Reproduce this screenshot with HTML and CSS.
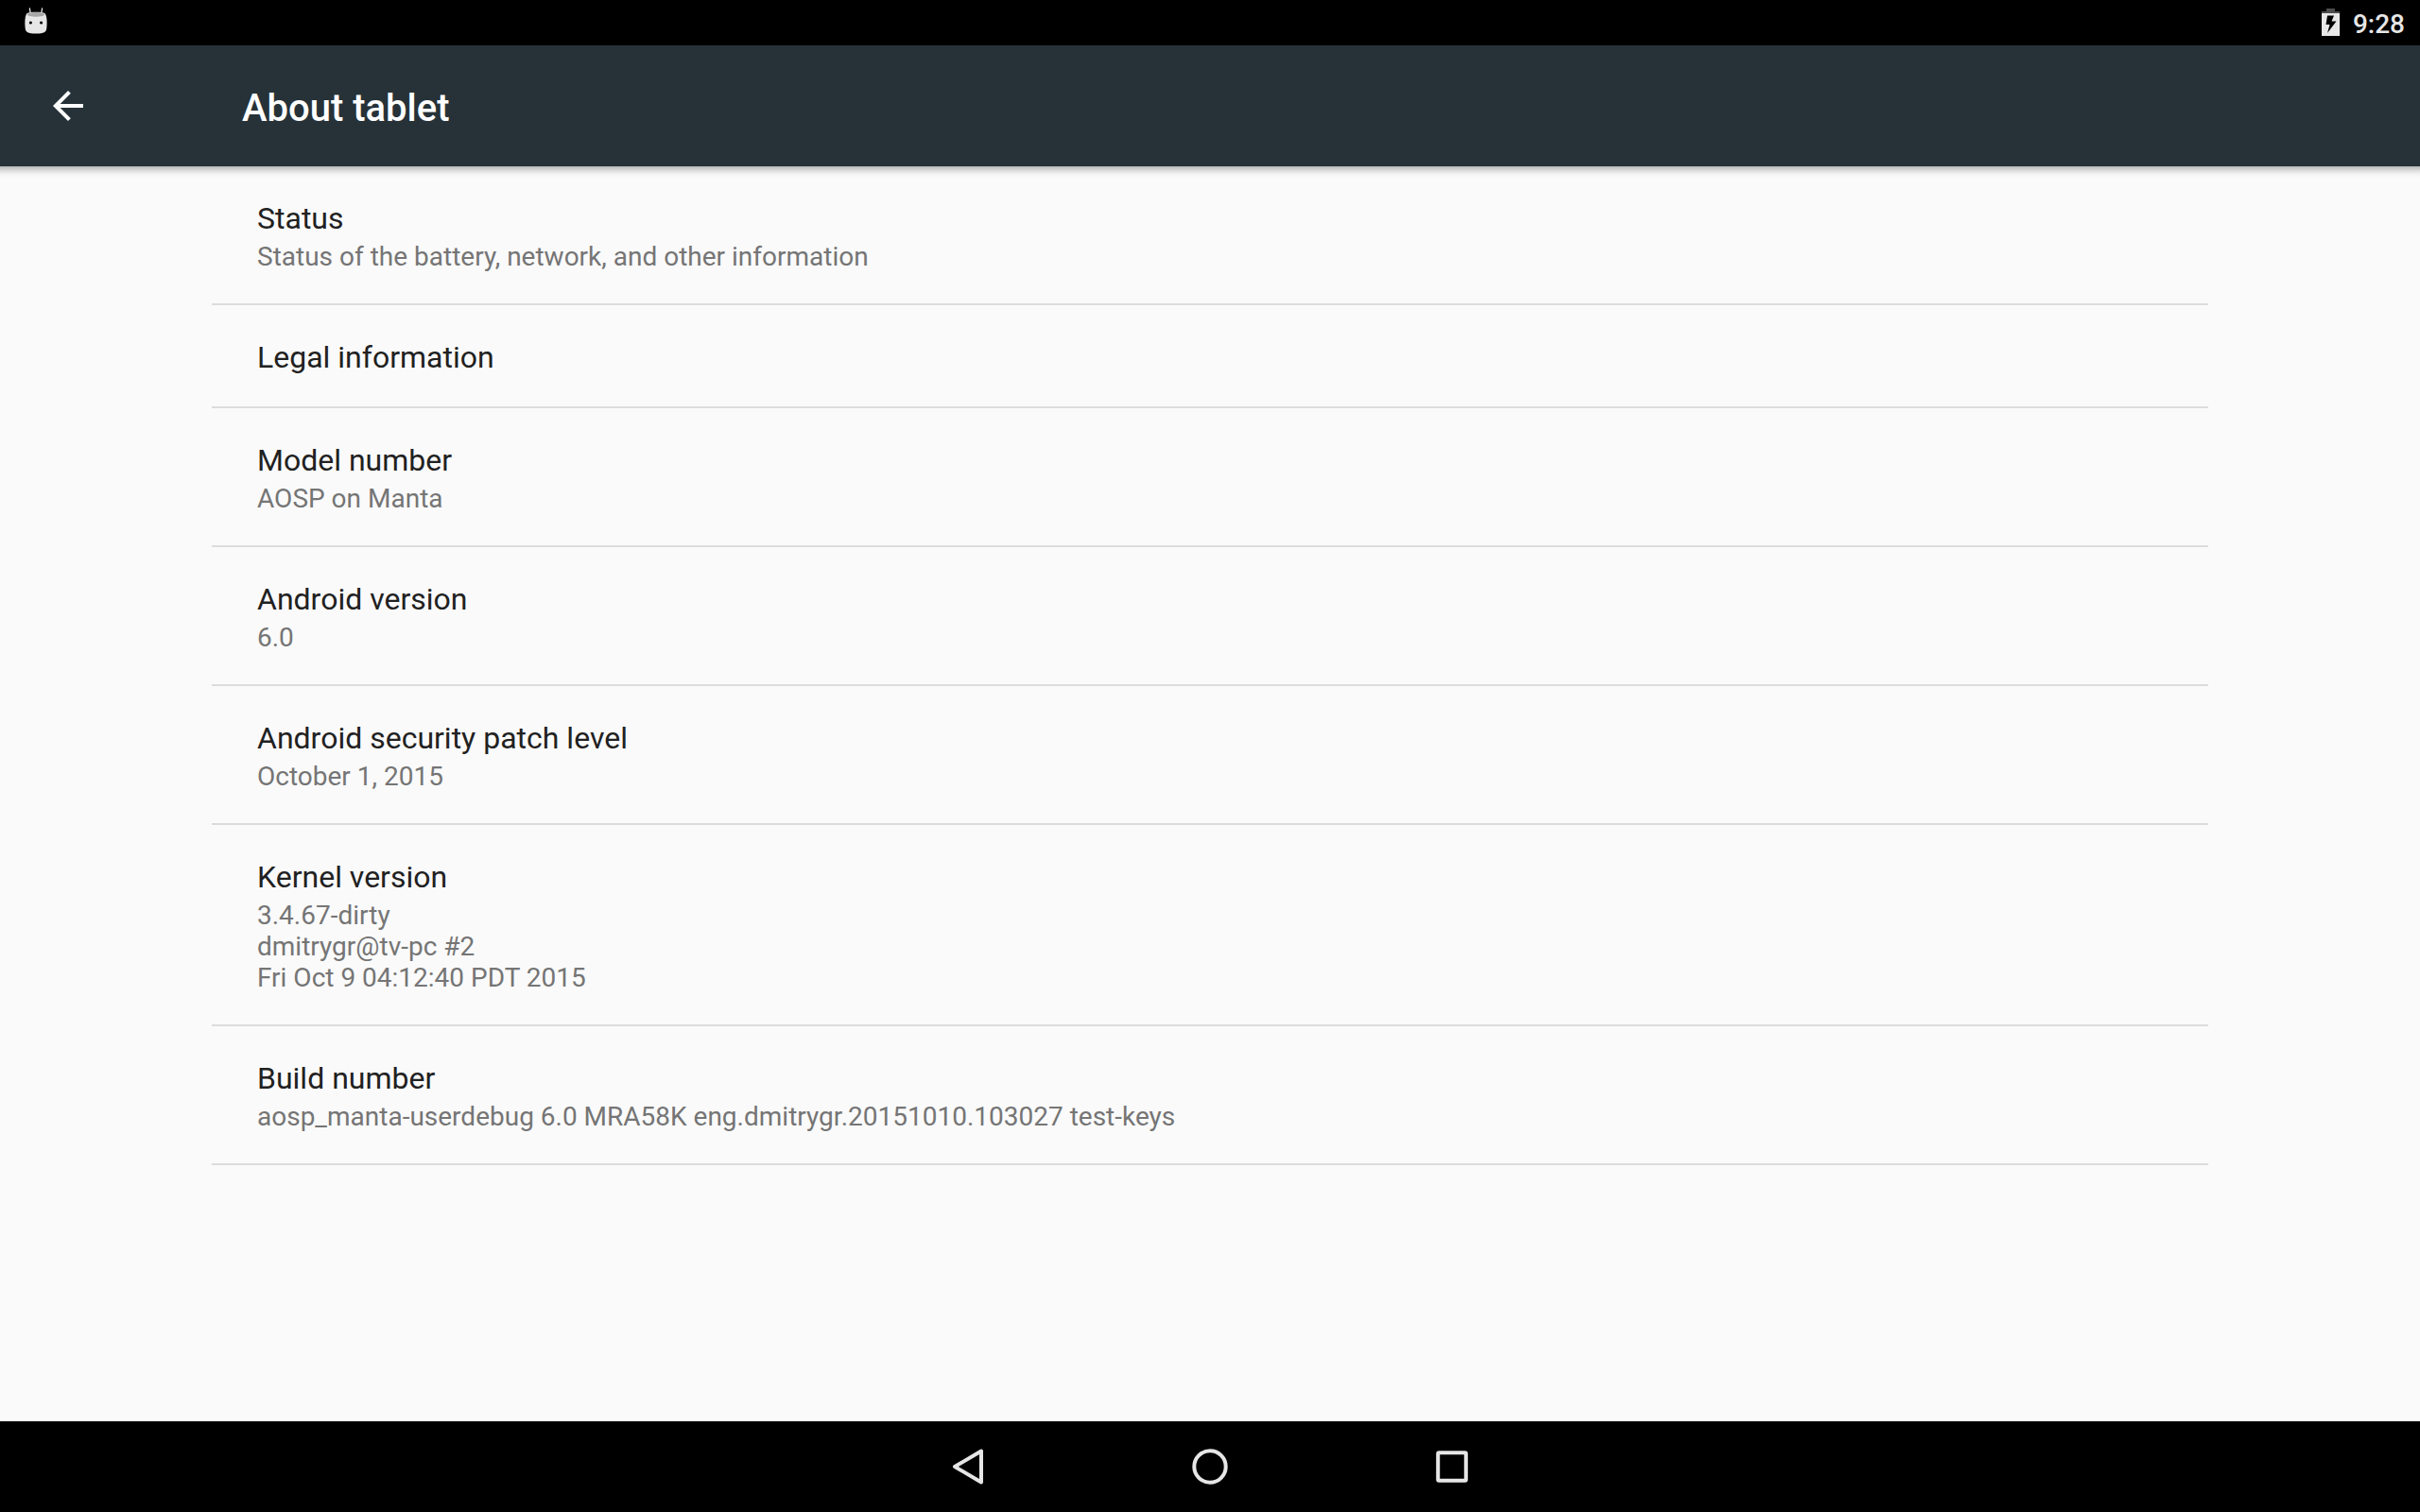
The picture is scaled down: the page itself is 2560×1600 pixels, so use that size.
FILE: index.html
```html
<!DOCTYPE html>
<html lang="en">
<head>
<meta charset="utf-8">
<title>About tablet</title>
<link rel="stylesheet" href="styles.css">
</head>
<body>
<div class="status-bar">
  <svg class="notification-icon" viewBox="0 0 24 28" aria-hidden="true">
    <path d="M5.4 .8 6.2 6M18.6 .8 17.8 6" fill="none" stroke="#e6e6e6" stroke-width="1.3" stroke-linecap="round"/>
    <path d="M2.6 6C6 4.4 18 4.4 21.4 6C24.200 9 23.800 18 23.200 22.500C22.600 26 21 27.500 12 27.500S1.400 26 .8 22.500C.2 18-.2 9 2.600 6Z" fill="#e6e6e6"/>
    <ellipse cx="12" cy="7.400" rx="9" ry="2.400" fill="#a6a6a6"/>
    <circle cx="6.400" cy="16" r="1.600" fill="#000"/>
    <circle cx="17.600" cy="16" r="1.600" fill="#000"/>
  </svg>
  <div class="status-right">
    <svg class="battery-icon" viewBox="0 0 19 29" aria-hidden="true">
      <path d="M5 0H14V3H19V5H0V3H5Z" fill="#4d4d4d"/>
      <path d="M0 5H19V29H0ZM6 7.500 4.500 17H8.500L6 26 15.500 13.500H10.500L13 7.500Z" fill="#e8e8e8" fill-rule="evenodd"/>
    </svg>
    <time class="clock">9:28</time>
  </div>
</div>
<header class="toolbar">
  <button class="up-button" aria-label="Navigate up">
    <svg class="up-icon" viewBox="0 0 24 24" aria-hidden="true"><path d="M20 11H7.830l5.590-5.590L12 4l-8 8 8 8 1.410-1.410L7.830 13H20v-2z" fill="#fff"/></svg>
  </button>
  <h1 class="toolbar-title">About tablet</h1>
</header>
<main class="content">
  <ul class="preferences">
    <li class="preference"><h2 class="title">Status</h2><p class="summary">Status of the battery, network, and other information</p></li>
    <li class="preference"><h2 class="title">Legal information</h2></li>
    <li class="preference"><h2 class="title">Model number</h2><p class="summary">AOSP on Manta</p></li>
    <li class="preference"><h2 class="title">Android version</h2><p class="summary">6.0</p></li>
    <li class="preference"><h2 class="title">Android security patch level</h2><p class="summary">October 1, 2015</p></li>
    <li class="preference"><h2 class="title">Kernel version</h2><p class="summary">3.4.67-dirty<br>dmitrygr@tv-pc #2<br>Fri Oct 9 04:12:40 PDT 2015</p></li>
    <li class="preference"><h2 class="title">Build number</h2><p class="summary">aosp_manta-userdebug 6.0 MRA58K eng.dmitrygr.20151010.103027 test-keys</p></li>
  </ul>
</main>
<nav class="nav-bar" aria-label="System navigation">
  <button class="nav-button" aria-label="Back">
    <svg class="nav-icon" viewBox="0 0 56 56" aria-hidden="true"><path d="M42 11.500V44.500L14 28Z" fill="none" stroke="#e6e6e6" stroke-width="4" stroke-linejoin="round"/></svg>
  </button>
  <button class="nav-button" aria-label="Home">
    <svg class="nav-icon" viewBox="0 0 56 56" aria-hidden="true"><circle cx="28" cy="28" r="16.700" fill="none" stroke="#e6e6e6" stroke-width="4"/></svg>
  </button>
  <button class="nav-button" aria-label="Recent apps">
    <svg class="nav-icon" viewBox="0 0 56 56" aria-hidden="true"><rect x="13.200" y="13.200" width="29.600" height="29.600" rx="1" fill="none" stroke="#e6e6e6" stroke-width="4"/></svg>
  </button>
</nav>
</body>
</html>
```
FILE: styles.css
```css
* {
  box-sizing: border-box;
}

body {
  margin: 0;
  min-height: 100vh;
  display: flex;
  flex-direction: column;
  background: #fafafa;
  font-family: Roboto, sans-serif;
}

h1, h2, p, ul {
  margin: 0;
  padding: 0;
}

button {
  display: flex;
  align-items: center;
  justify-content: center;
  padding: 0;
  border: 0;
  background: none;
}

.status-bar {
  display: flex;
  justify-content: space-between;
  height: 48px;
  padding: 8px 16px 0 26px;
  background: #000;
}

.notification-icon {
  width: 24px;
  height: 28px;
}

.status-right {
  display: flex;
  gap: 14px;
}

.battery-icon {
  width: 19px;
  height: 29px;
  margin-top: 1px;
}

.clock {
  color: #e6e6e6;
  font-size: 28px;
  font-weight: 500;
  line-height: 36px;
}

.toolbar {
  display: flex;
  align-items: center;
  height: 128px;
  padding: 0 16px;
  background: #263238;
}

.up-button {
  width: 112px;
  height: 112px;
}

.up-icon {
  width: 48px;
  height: 48px;
}

.toolbar-title {
  margin-left: 128px;
  padding-top: 6px;
  color: #fff;
  font-size: 40px;
  font-weight: 500;
  line-height: 48px;
}

.content {
  flex: 1;
  padding: 0 224px;
  /* shadow cast by the toolbar */
  background: linear-gradient(#b8b8b8, #d8d8d8 4px, #f2f2f2 8px, #fafafa 12px);
}

.preferences {
  list-style: none;
}

.preference {
  padding: 36px 48px 33px;
  border-bottom: 2px solid #dcdcdc;
}

.title {
  color: #212121;
  font-size: 32px;
  font-weight: 400;
  line-height: 38px;
}

.summary {
  margin-top: 5px;
  color: #757575;
  font-size: 28px;
  line-height: 33px;
}

.nav-bar {
  display: flex;
  justify-content: center;
  height: 96px;
  background: #000;
}

.nav-button {
  width: 256px;
}

.nav-icon {
  width: 56px;
  height: 56px;
}
```
